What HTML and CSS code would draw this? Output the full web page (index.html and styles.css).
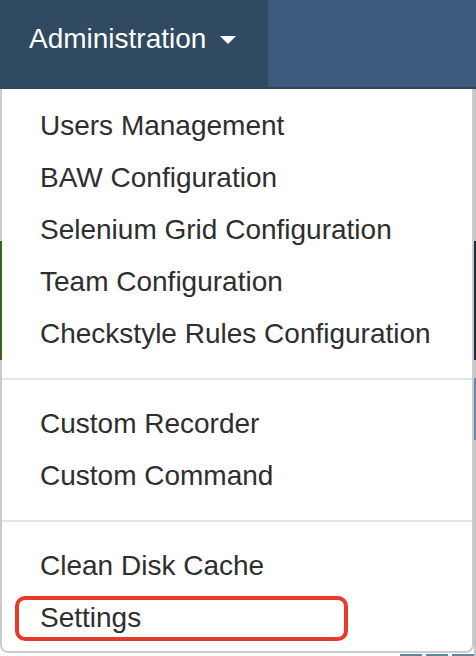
FILE: index.html
```html
<!DOCTYPE html>
<html lang="en">
<head>
<meta charset="utf-8">
<title>Administration menu</title>
<link rel="stylesheet" href="styles.css">
</head>
<body>
<div class="app">
  <nav class="navbar">
    <div class="nav-tab">
      <span class="nav-label">Administration</span>
      <span class="caret"></span>
    </div>
    <div class="nav-rest"></div>
  </nav>
  <div class="nav-line"></div>
  <main class="page">
    <div class="edge-left"><div class="green-block"></div></div>
    <div class="page-body">
      <div class="status"><span class="status-icon"></span><span class="status-text">Failed</span></div>
      <div class="status-boxes"><span class="sbox"></span><span class="sbox"></span><span class="sbox"></span></div>
    </div>
    <div class="edge-right">
      <div class="navy-block"></div>
      <div class="blue-block"></div>
    </div>
  </main>
  <ul class="dropdown">
    <li class="item">Users Management</li>
    <li class="item">BAW Configuration</li>
    <li class="item">Selenium Grid Configuration</li>
    <li class="item">Team Configuration</li>
    <li class="item">Checkstyle Rules Configuration</li>
    <li class="divider"></li>
    <li class="item">Custom Recorder</li>
    <li class="item">Custom Command</li>
    <li class="divider"></li>
    <li class="item">Clean Disk Cache</li>
    <li class="item item-highlighted">Settings<span class="highlight"></span></li>
  </ul>
</div>
</body>
</html>
```

FILE: styles.css
```css
* { box-sizing: border-box; }
html, body { margin: 0; padding: 0; }
body {
  width: 476px;
  height: 656px;
  overflow: hidden;
  background: #ffffff;
  font-family: "Liberation Sans", Arial, Helvetica, sans-serif;
}
.app {
  position: relative;
  width: 476px;
  height: 656px;
  overflow: hidden;
  display: flex;
  flex-direction: column;
}
.navbar {
  flex: 0 0 87px;
  display: flex;
  height: 87px;
  background: #3d5a7e;
}
.nav-tab {
  display: flex;
  align-items: flex-start;
  width: 268px;
  padding: 19px 0 0 29px;
  background: #2f4a61;
  color: #ffffff;
}
.nav-label {
  font-size: 28px;
  line-height: 40px;
}
.caret {
  margin: 17px 0 0 14px;
  width: 0;
  height: 0;
  border-top: 8px solid #ffffff;
  border-left: 8px solid transparent;
  border-right: 8px solid transparent;
}
.nav-rest { flex: 1; }
.nav-line {
  flex: 0 0 2px;
  height: 2px;
  background: #2e4760;
}
.page {
  flex: 1 1 auto;
  min-height: 0;
  overflow: hidden;
  display: grid;
  grid-template-columns: 2px 1fr 2px;
  background: #ffffff;
}
.edge-left { padding-top: 152px; }
.green-block {
  height: 119px;
  background: #4a7f1f;
}
.edge-right {
  background: #c4c4c4;
  padding-top: 152px;
}
.navy-block {
  height: 119px;
  background: #1f2d3e;
}
.blue-block {
  margin-top: 18px;
  height: 62px;
  background: #6b89ad;
}
.page-body {
  display: flex;
  align-items: flex-start;
  justify-content: space-between;
  padding: 563px 0 0 55px;
}
.status {
  display: flex;
  align-items: center;
  gap: 8px;
  color: #c9302c;
  font-size: 28px;
  line-height: 32px;
}
.status-icon {
  width: 20px;
  height: 20px;
  border-radius: 50%;
  background: #c9302c;
}
.status-boxes {
  display: flex;
  gap: 4px;
  padding-top: 2px;
}
.sbox {
  width: 22px;
  height: 20px;
  background: #5b8aa0;
}
.dropdown {
  position: absolute;
  top: 89px;
  left: 0;
  width: 474px;
  margin: 0;
  padding: 11px 0 7px;
  list-style: none;
  background: #ffffff;
  background-clip: padding-box;
  border: 2px solid rgba(0, 0, 0, 0.2);
  border-top: 0;
  border-radius: 0 0 8px 8px;
}
.item {
  position: relative;
  padding: 6px 38px;
  font-size: 28px;
  line-height: 40px;
  color: #2e2e2e;
  white-space: nowrap;
}
.divider {
  height: 2px;
  margin: 18px 0;
  background: #e5e5e5;
}
.highlight {
  position: absolute;
  left: 13px;
  top: 4px;
  width: 333px;
  height: 45px;
  border: 4px solid #e8392a;
  border-radius: 10px;
}
```
